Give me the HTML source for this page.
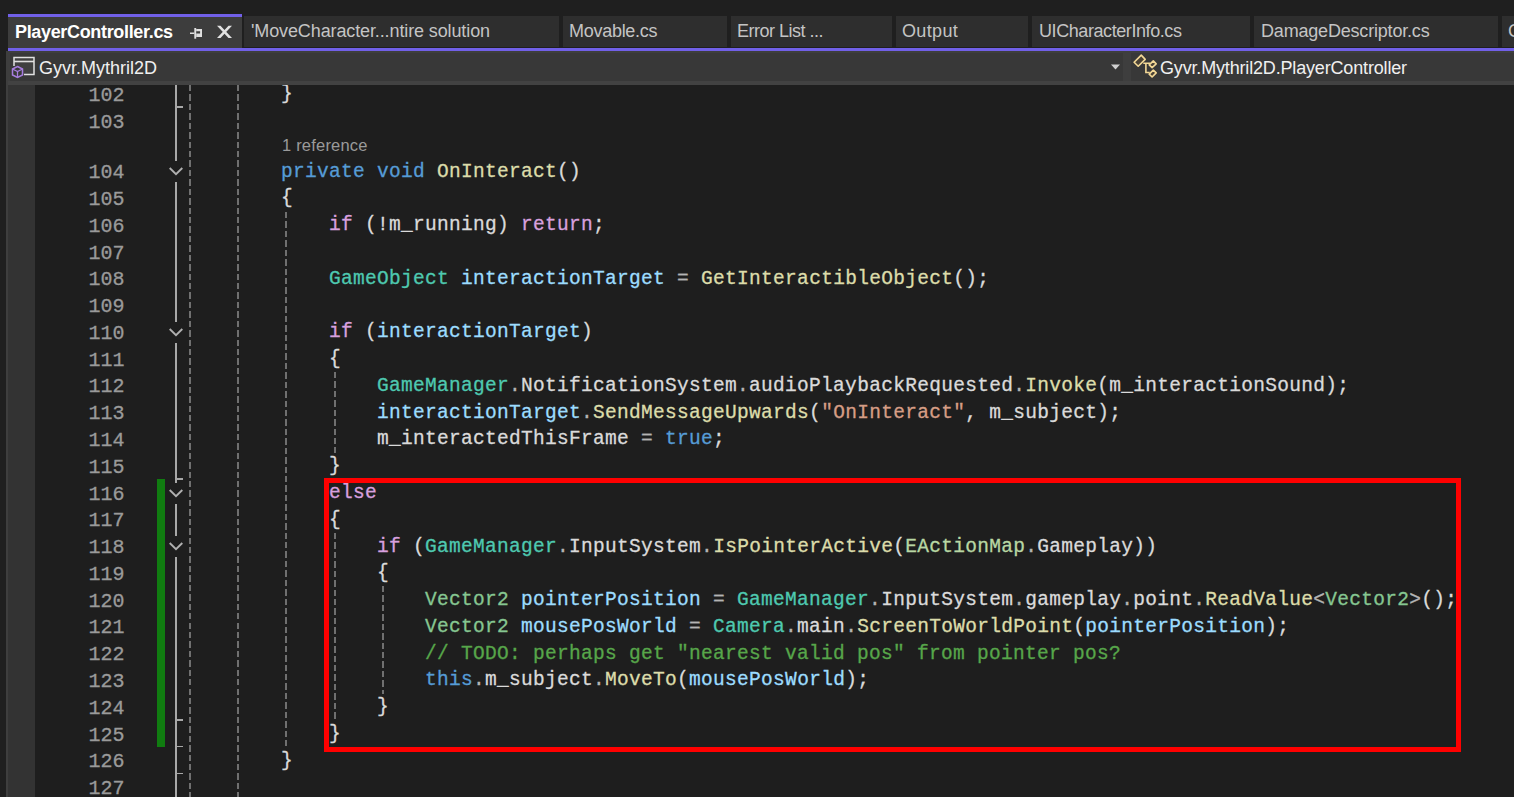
<!DOCTYPE html>
<html><head><meta charset="utf-8"><style>
*{margin:0;padding:0;box-sizing:border-box}
html,body{width:1514px;height:797px;overflow:hidden;background:#1f1f1f}
body{position:relative;font-family:"Liberation Sans",sans-serif}
.abs{position:absolute}
.tab{position:absolute;top:16px;height:31px;background:#2e2e2e;color:#c4c4c4;font-size:18px;white-space:nowrap;overflow:hidden}
.tab span{position:absolute;top:4px;line-height:22px}
.code{position:absolute;font-family:"Liberation Mono",monospace;font-size:19.5px;letter-spacing:0.3px;line-height:26.78px;height:26.78px;white-space:pre;color:#dadada;-webkit-text-stroke:0.3px currentColor}
.ln{position:absolute;font-family:"Liberation Mono",monospace;font-size:20px;line-height:26.78px;height:26.78px;white-space:pre;color:#9a9a9a;text-align:right;width:60px;left:64.5px;-webkit-text-stroke:0.3px currentColor}
.g{position:absolute;width:2px;background:repeating-linear-gradient(to bottom,#707070 0,#707070 6.4px,transparent 6.4px,transparent 9.43px)}
.fl{position:absolute;left:175px;width:2px;background:#a8a8a8}
.tk{position:absolute;left:175px;width:8px;height:1.7px;background:#a8a8a8}
</style></head><body>

<div class="abs" style="left:8px;top:14px;width:234px;height:3px;background:#7160e8"></div>
<div class="abs" style="left:8px;top:17px;width:234px;height:31px;background:#3d3d3d"></div>
<div class="abs" style="left:15px;top:20px;font-weight:bold;font-size:18px;line-height:24px;color:#ffffff;white-space:nowrap;letter-spacing:-0.333px">PlayerController.cs</div>
<svg class="abs" style="left:186px;top:24px" width="20" height="18" viewBox="0 0 20 18">
<g fill="#e0e0e0"><rect x="8.3" y="4" width="1.9" height="10.7"/><rect x="4" y="8.5" width="4.3" height="1.5"/>
<path fill-rule="evenodd" d="M10.2 5H16V13H10.2ZM10.2 7.2V9.6H14.1V7.2Z"/></g>
</svg>
<svg class="abs" style="left:214px;top:23px" width="22" height="18" viewBox="0 0 22 18">
<path d="M3 2.8H6.5L18 15H14.5ZM14.5 2.8H18L6.5 15H3Z" fill="#e2e2e2"/>
</svg>
<div class="tab" style="left:244px;width:315px"><span style="left:7px;letter-spacing:-0.117px">'MoveCharacter...ntire solution</span></div>
<div class="tab" style="left:563px;width:164px"><span style="left:6px;letter-spacing:-0.28px">Movable.cs</span></div>
<div class="tab" style="left:731px;width:161px"><span style="left:6px;letter-spacing:-0.5px">Error List ...</span></div>
<div class="tab" style="left:896px;width:132px"><span style="left:6px;letter-spacing:0.36px">Output</span></div>
<div class="tab" style="left:1032px;width:218px"><span style="left:7px;letter-spacing:-0.42px">UICharacterInfo.cs</span></div>
<div class="tab" style="left:1254px;width:244px"><span style="left:7px;letter-spacing:-0.19px">DamageDescriptor.cs</span></div>
<div class="tab" style="left:1502px;width:98px"><span style="left:6px;letter-spacing:0px">C</span></div>
<div class="abs" style="left:8px;top:48px;width:1506px;height:3px;background:#7160e8"></div>
<div class="abs" style="left:6px;top:51px;width:1508px;height:34px;background:#3e3e3e"></div>
<div class="abs" style="left:8px;top:81px;width:1506px;height:4px;background:#424242"></div>
<div class="abs" style="left:10px;top:53px;width:1113px;height:28px;background:#383838"></div>
<div class="abs" style="left:1131px;top:53px;width:383px;height:28px;background:#383838"></div>
<svg class="abs" style="left:1110px;top:64px" width="11" height="7"><path d="M1 0.5H10L5.5 5.5Z" fill="#d0d0d0"/></svg>
<svg class="abs" style="left:11px;top:56px" width="25" height="24" viewBox="0 0 25 24">
<path d="M3 1.5H23V18.5H3Z" fill="#404040"/>
<path d="M3 10V1.5H23V18.5H13" stroke="#e0e0e0" stroke-width="1.5" fill="none"/>
<path d="M3 5.5H23" stroke="#e0e0e0" stroke-width="1.6"/>
<path d="M6.5 10.5L11.5 13V19L6.5 21.5L1.5 19V13Z" stroke="#a77ddf" stroke-width="1.5" fill="#383838"/>
<path d="M1.5 13L6.5 15.5L11.5 13M6.5 15.5V21.5" stroke="#a77ddf" stroke-width="1.3" fill="none"/>
</svg>
<div class="abs" style="left:39px;top:57px;font-size:18px;line-height:22px;color:#f0f0f0;white-space:nowrap">Gyvr.Mythril2D</div>
<svg class="abs" style="left:1128px;top:50px" width="34" height="32" viewBox="0 0 34 32">
<g stroke="#f3d896" stroke-width="1.6" fill="#4a4236" stroke-linejoin="round">
<path d="M6.1 12.2L13.25 5.1L17.2 9.4L10.2 16.2Z"/>
<path d="M21.2 14.9L25.3 10.9L28.2 13.9L24.1 17.6Z"/>
<path d="M21.2 24.1L25.3 20.1L28.2 22.9L24.1 27Z"/>
</g>
<path d="M15.3 13.25H22.1M17.9 13.25V22.5H21.7" stroke="#f3d896" stroke-width="1.6" fill="none"/>
</svg>
<div class="abs" style="left:1160px;top:57px;font-size:18px;line-height:22px;color:#f0f0f0;white-space:nowrap;letter-spacing:-0.167px">Gyvr.Mythril2D.PlayerController</div>
<div class="abs" style="left:6px;top:85px;width:2px;height:712px;background:#3e3e3e"></div>
<div class="abs" style="left:8px;top:85px;width:27px;height:712px;background:#333333"></div>
<div class="abs" style="left:35px;top:85px;width:1479px;height:712px;background:#1e1e1e;overflow:hidden">
<div class="ln" style="left:29.5px;top:-2.16px">102</div>
<div class="ln" style="left:29.5px;top:24.62px">103</div>
<div class="ln" style="left:29.5px;top:75.20px">104</div>
<div class="ln" style="left:29.5px;top:101.98px">105</div>
<div class="ln" style="left:29.5px;top:128.76px">106</div>
<div class="ln" style="left:29.5px;top:155.54px">107</div>
<div class="ln" style="left:29.5px;top:182.32px">108</div>
<div class="ln" style="left:29.5px;top:209.10px">109</div>
<div class="ln" style="left:29.5px;top:235.88px">110</div>
<div class="ln" style="left:29.5px;top:262.66px">111</div>
<div class="ln" style="left:29.5px;top:289.44px">112</div>
<div class="ln" style="left:29.5px;top:316.22px">113</div>
<div class="ln" style="left:29.5px;top:343.00px">114</div>
<div class="ln" style="left:29.5px;top:369.78px">115</div>
<div class="ln" style="left:29.5px;top:396.56px">116</div>
<div class="ln" style="left:29.5px;top:423.34px">117</div>
<div class="ln" style="left:29.5px;top:450.12px">118</div>
<div class="ln" style="left:29.5px;top:476.90px">119</div>
<div class="ln" style="left:29.5px;top:503.68px">120</div>
<div class="ln" style="left:29.5px;top:530.46px">121</div>
<div class="ln" style="left:29.5px;top:557.24px">122</div>
<div class="ln" style="left:29.5px;top:584.02px">123</div>
<div class="ln" style="left:29.5px;top:610.80px">124</div>
<div class="ln" style="left:29.5px;top:637.58px">125</div>
<div class="ln" style="left:29.5px;top:664.36px">126</div>
<div class="ln" style="left:29.5px;top:691.14px">127</div>
<div class="abs" style="left:247px;top:51px;font-size:16.5px;line-height:18px;color:#9a9a9a;white-space:nowrap;letter-spacing:0.2px">1 reference</div>
<div class="g" style="left:154px;top:0.00px;height:712.00px"></div>
<div class="g" style="left:202px;top:0.00px;height:712.00px"></div>
<div class="g" style="left:250px;top:126.56px;height:535.60px"></div>
<div class="g" style="left:299px;top:287.24px;height:80.34px"></div>
<div class="g" style="left:299px;top:447.92px;height:187.46px"></div>
<div class="g" style="left:347px;top:501.48px;height:107.12px"></div>
<div class="fl" style="left:140px;top:0.00px;height:76.00px"></div>
<div class="tk" style="left:140px;top:21.02px"></div>
<svg class="abs" style="left:132px;top:80.39px" width="18" height="12" viewBox="0 0 18 12"><path d="M2.7 3L9 9.2L15.3 3" stroke="#b0b0b0" stroke-width="1.9" fill="none"/></svg>
<div class="fl" style="left:140px;top:97.18px;height:139.60px"></div>
<svg class="abs" style="left:132px;top:241.07px" width="18" height="12" viewBox="0 0 18 12"><path d="M2.7 3L9 9.2L15.3 3" stroke="#b0b0b0" stroke-width="1.9" fill="none"/></svg>
<div class="fl" style="left:140px;top:257.86px;height:140.00px"></div>
<div class="tk" style="left:140px;top:392.96px"></div>
<svg class="abs" style="left:132px;top:401.75px" width="18" height="12" viewBox="0 0 18 12"><path d="M2.7 3L9 9.2L15.3 3" stroke="#b0b0b0" stroke-width="1.9" fill="none"/></svg>
<div class="fl" style="left:140px;top:418.54px;height:32.48px"></div>
<svg class="abs" style="left:132px;top:455.31px" width="18" height="12" viewBox="0 0 18 12"><path d="M2.7 3L9 9.2L15.3 3" stroke="#b0b0b0" stroke-width="1.9" fill="none"/></svg>
<div class="fl" style="left:140px;top:472.10px;height:239.90px"></div>
<div class="tk" style="left:140px;top:633.98px"></div>
<div class="tk" style="left:140px;top:660.76px"></div>
<div class="tk" style="left:140px;top:687.54px"></div>
<div class="abs" style="left:122px;top:394.36px;width:8px;height:267.80px;background:#107c10"></div>
<div class="code" style="left:246.0px;top:-3.76px"><span style="color:#dadada">}</span></div>
<div class="code" style="left:246.0px;top:73.60px"><span style="color:#569cd6">private</span><span style="color:#dadada"> </span><span style="color:#569cd6">void</span><span style="color:#dadada"> </span><span style="color:#dcdcaa">OnInteract</span><span style="color:#dadada">()</span></div>
<div class="code" style="left:246.0px;top:100.38px"><span style="color:#dadada">{</span></div>
<div class="code" style="left:294.0px;top:127.16px"><span style="color:#d8a0df">if</span><span style="color:#dadada"> (!</span><span style="color:#dadada">m_running</span><span style="color:#dadada">) </span><span style="color:#d8a0df">return</span><span style="color:#dadada">;</span></div>
<div class="code" style="left:294.0px;top:180.72px"><span style="color:#4ec9b0">GameObject</span><span style="color:#dadada"> </span><span style="color:#9cdcfe">interactionTarget</span><span style="color:#b4b4b4"> = </span><span style="color:#dcdcaa">GetInteractibleObject</span><span style="color:#dadada">();</span></div>
<div class="code" style="left:294.0px;top:234.28px"><span style="color:#d8a0df">if</span><span style="color:#dadada"> (</span><span style="color:#9cdcfe">interactionTarget</span><span style="color:#dadada">)</span></div>
<div class="code" style="left:294.0px;top:261.06px"><span style="color:#dadada">{</span></div>
<div class="code" style="left:342.0px;top:287.84px"><span style="color:#4ec9b0">GameManager</span><span style="color:#b4b4b4">.</span><span style="color:#dadada">NotificationSystem</span><span style="color:#b4b4b4">.</span><span style="color:#dadada">audioPlaybackRequested</span><span style="color:#b4b4b4">.</span><span style="color:#dcdcaa">Invoke</span><span style="color:#dadada">(</span><span style="color:#dadada">m_interactionSound</span><span style="color:#dadada">);</span></div>
<div class="code" style="left:342.0px;top:314.62px"><span style="color:#9cdcfe">interactionTarget</span><span style="color:#b4b4b4">.</span><span style="color:#dcdcaa">SendMessageUpwards</span><span style="color:#dadada">(</span><span style="color:#d69d85">"OnInteract"</span><span style="color:#dadada">, </span><span style="color:#dadada">m_subject</span><span style="color:#dadada">);</span></div>
<div class="code" style="left:342.0px;top:341.40px"><span style="color:#dadada">m_interactedThisFrame</span><span style="color:#b4b4b4"> = </span><span style="color:#569cd6">true</span><span style="color:#dadada">;</span></div>
<div class="code" style="left:294.0px;top:368.18px"><span style="color:#dadada">}</span></div>
<div class="code" style="left:294.0px;top:394.96px"><span style="color:#d8a0df">else</span></div>
<div class="code" style="left:294.0px;top:421.74px"><span style="color:#dadada">{</span></div>
<div class="code" style="left:342.0px;top:448.52px"><span style="color:#d8a0df">if</span><span style="color:#dadada"> (</span><span style="color:#4ec9b0">GameManager</span><span style="color:#b4b4b4">.</span><span style="color:#dadada">InputSystem</span><span style="color:#b4b4b4">.</span><span style="color:#dcdcaa">IsPointerActive</span><span style="color:#dadada">(</span><span style="color:#b8d7a3">EActionMap</span><span style="color:#b4b4b4">.</span><span style="color:#dadada">Gameplay</span><span style="color:#dadada">))</span></div>
<div class="code" style="left:342.0px;top:475.30px"><span style="color:#dadada">{</span></div>
<div class="code" style="left:390.0px;top:502.08px"><span style="color:#86c691">Vector2</span><span style="color:#dadada"> </span><span style="color:#9cdcfe">pointerPosition</span><span style="color:#b4b4b4"> = </span><span style="color:#4ec9b0">GameManager</span><span style="color:#b4b4b4">.</span><span style="color:#dadada">InputSystem</span><span style="color:#b4b4b4">.</span><span style="color:#dadada">gameplay</span><span style="color:#b4b4b4">.</span><span style="color:#dadada">point</span><span style="color:#b4b4b4">.</span><span style="color:#dcdcaa">ReadValue</span><span style="color:#b4b4b4">&lt;</span><span style="color:#86c691">Vector2</span><span style="color:#b4b4b4">&gt;</span><span style="color:#dadada">();</span></div>
<div class="code" style="left:390.0px;top:528.86px"><span style="color:#86c691">Vector2</span><span style="color:#dadada"> </span><span style="color:#9cdcfe">mousePosWorld</span><span style="color:#b4b4b4"> = </span><span style="color:#4ec9b0">Camera</span><span style="color:#b4b4b4">.</span><span style="color:#dadada">main</span><span style="color:#b4b4b4">.</span><span style="color:#dcdcaa">ScreenToWorldPoint</span><span style="color:#dadada">(</span><span style="color:#9cdcfe">pointerPosition</span><span style="color:#dadada">);</span></div>
<div class="code" style="left:390.0px;top:555.64px"><span style="color:#57a64a">// TODO: perhaps get "nearest valid pos" from pointer pos?</span></div>
<div class="code" style="left:390.0px;top:582.42px"><span style="color:#569cd6">this</span><span style="color:#b4b4b4">.</span><span style="color:#dadada">m_subject</span><span style="color:#b4b4b4">.</span><span style="color:#dcdcaa">MoveTo</span><span style="color:#dadada">(</span><span style="color:#9cdcfe">mousePosWorld</span><span style="color:#dadada">);</span></div>
<div class="code" style="left:342.0px;top:609.20px"><span style="color:#dadada">}</span></div>
<div class="code" style="left:294.0px;top:635.98px"><span style="color:#dadada">}</span></div>
<div class="code" style="left:246.0px;top:662.76px"><span style="color:#dadada">}</span></div>
<div class="abs" style="left:289px;top:393px;width:1137px;height:274px;border:5px solid #ff0000"></div>
</div>
</body></html>
